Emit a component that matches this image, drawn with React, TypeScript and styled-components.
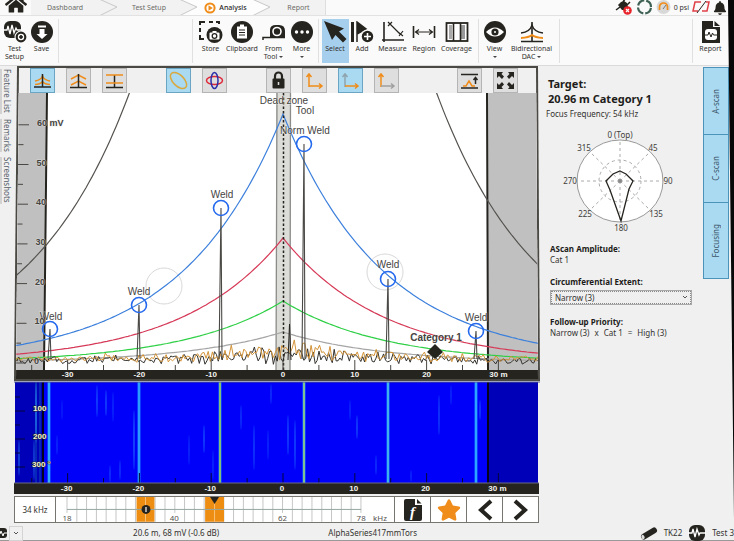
import React from "react";
import styled, { createGlobalStyle, css } from "styled-components";
import { FaHome, FaBell, FaStar } from "react-icons/fa";

const INK = "#26241f";
const ORANGE = "#f08c1a";
const SKY = "#a9daf2";
const SANS = '"Noto Sans", "Open Sans", sans-serif';
const PLOT = '"Liberation Sans", Arial, sans-serif';

const GlobalStyle = createGlobalStyle`
  * { box-sizing: border-box; }
  html, body { margin: 0; padding: 0; background: #f0f0f0; }
  body { font-family: ${SANS}; font-size: 8px; color: #33322f; overflow: hidden; }
  button, select { font: inherit; color: inherit; margin: 0; padding: 0; border: 0; background: none; border-radius: 0; }
  a { color: inherit; text-decoration: none; }
  svg { display: block; }
`;

const Screen = styled.div`
  position: relative;
  display: flex;
  flex-direction: column;
  min-height: 100vh;
`;

const Bezel = styled.div`
  position: absolute;
  top: 0;
  right: 0;
  bottom: 0;
  width: 7px;
  background: #080808;
  clip-path: polygon(1px 0, 100% 0, 100% 100%, 7px 96%);
  pointer-events: none;
`;

/* ---------- navigation bar ---------- */

const TopBar = styled.header`
  display: flex;
  align-items: stretch;
  height: 16px;
  background: #fafafa;
  border-bottom: 1px solid #e2e2e2;
  overflow: hidden;
`;

const HomeLink = styled.a`
  width: 31px;
  display: flex;
  justify-content: center;
  align-items: flex-end;
  color: ${INK};
`;

const Crumbs = styled.nav`
  display: flex;
  font-size: 7px;
  line-height: 14px;
  color: #6c6c68;
  border-right: 1px solid #dedede;
`;

const Crumb = styled.a<{ $w: number; $current?: boolean }>`
  width: ${(p) => p.$w}px;
  display: flex;
  align-items: center;
  justify-content: center;
  gap: 3px;
  background: ${(p) => (p.$current ? "#fdfdfd" : "#f2f2f2")};
  ${(p) =>
    p.$current &&
    css`
      color: #2a2926;
      font-weight: 500;
    `}
`;

const Indicators = styled.div`
  margin-left: auto;
  padding-right: 7px;
  display: flex;
  align-items: center;
  gap: 3px;
  font-size: 7px;
`;

const Arrow = ({ left, right }: { left: string; right: string }) => (
  <svg width="20" height="16" viewBox="0 0 20 16">
    <rect width="20" height="16" fill={right} />
    <path d="M0 -1 L18 7 L0 16 Z" fill={left} />
    <path d="M0 -1 L18 7 L0 16" fill="none" stroke="#c8c8c8" strokeWidth="1" />
  </svg>
);

/* ---------- ribbon ---------- */

const Ribbon = styled.div`
  display: flex;
  height: 50px;
  padding: 3px 6px 2px 0;
  background: #fafafa;
  border-bottom: 1px solid #dadada;
`;

const Group = styled.div`
  display: flex;
  padding: 0 3px;
  border-right: 1px solid #e0e0e0;
  &:first-child { padding-left: 1px; }
  &:last-child { border-right: 0; }
`;

const Gap = styled.div`
  flex: 1;
  border-right: 1px solid #e0e0e0;
`;

const Tool = styled.button<{ $w: number; $on?: boolean }>`
  width: ${(p) => p.$w}px;
  display: flex;
  flex-direction: column;
  align-items: center;
  padding-top: 2px;
  gap: 2px;
  font-size: 7px;
  line-height: 8px;
  white-space: nowrap;
  background: ${(p) => (p.$on ? "#a6cfee" : "transparent")};
`;

const Caret = styled.span`
  display: inline-block;
  margin-left: 2px;
  vertical-align: middle;
  border: 2px solid transparent;
  border-top-color: #444;
  border-bottom: 0;
`;

const Glyph = ({ children, w = 24 }: { children: React.ReactNode; w?: number }) => (
  <svg width={w} height="22" viewBox={`0 0 ${w} 22`} fill="none" stroke={INK}>
    {children}
  </svg>
);

const TestSetupIcon = () => (
  <Glyph>
    <rect x="1" y="0" width="17" height="17" rx="6" fill={INK} stroke="none" />
    <path d="M1 9h3l1-4 2 8 2-9 2 8 2-5 1 2h4" stroke="#fff" strokeWidth="1.3" />
    <circle cx="18" cy="16" r="6.500" fill="#fafafa" stroke="none" />
    <circle cx="18" cy="16" r="4.3" strokeWidth="2.2" />
    <circle cx="18" cy="16" r="1.4" fill={INK} />
  </Glyph>
);
const SaveIcon = () => (
  <Glyph>
    <circle cx="12" cy="11" r="11" fill={INK} stroke="none" />
    <path d="M9.500 8h5v5h3L12 18l-5.500-5h3z" fill="#fff" stroke="none" />
    <path d="M8 5.500h8" stroke="#fff" strokeWidth="2" />
  </Glyph>
);
const StoreIcon = () => (
  <Glyph>
    <path d="M1 4V1h5M10 1h4M17 1h3v2M1 7v4M1 14v4h4" strokeWidth="2" />
    <circle cx="15.500" cy="14" r="8" fill={INK} stroke="none" />
    <rect x="10.500" y="11.500" width="10" height="7" rx="1" fill="#fff" stroke="none" />
    <path d="M13.500 10h4v2h-4z" fill="#fff" stroke="none" />
    <circle cx="15.500" cy="15" r="2.300" strokeWidth="1.300" />
  </Glyph>
);
const ClipboardIcon = () => (
  <Glyph>
    <circle cx="12" cy="11" r="11" fill={INK} stroke="none" />
    <rect x="7" y="5.500" width="10" height="12" fill="#fff" stroke="none" />
    <path d="M10 3.500h4v3h-4z" fill="#fff" stroke="none" />
    <path d="M9 9h6M9 11.500h6M9 14h6" strokeWidth="1" />
  </Glyph>
);
const TapeIcon = () => (
  <Glyph>
    <path d="M8 17V9q0-5 6-5h3q6 0 6 6v7H8z" fill={INK} stroke="none" />
    <path d="M1 19v-2.500h22" strokeWidth="1.500" />
    <circle cx="15" cy="10.500" r="4" fill={INK} stroke="#fff" strokeWidth="1.600" />
  </Glyph>
);
const MoreIcon = () => (
  <Glyph>
    <circle cx="12" cy="11" r="11" fill={INK} stroke="none" />
    <g fill="#fff" stroke="none">
      <circle cx="6.500" cy="11" r="1.700" />
      <circle cx="12" cy="11" r="1.700" />
      <circle cx="17.500" cy="11" r="1.700" />
    </g>
  </Glyph>
);
const SelectIcon = () => (
  <Glyph>
    <path d="M1 0 21 7.500 16 10.500 23.500 18 20 21.500 12.500 14 9 19z" fill={INK} stroke="none" />
  </Glyph>
);
const AddIcon = () => (
  <Glyph>
    <path d="M2.500 1v20" strokeWidth="3" />
    <path d="M7 21V1l9 7-9 5" fill={INK} strokeWidth="1.500" />
    <circle cx="17.500" cy="15.500" r="7" fill="#fafafa" stroke="none" />
    <circle cx="17.500" cy="15.500" r="5.700" fill={INK} stroke="none" />
    <path d="M17.500 12v7M14 15.500h7" stroke="#fff" strokeWidth="1.600" />
  </Glyph>
);
const MeasureIcon = () => (
  <Glyph>
    <path d="M3 1v20M1 19h22" strokeWidth="1.600" />
    <path d="m9 3 10 10M7 1l4 4M11 1 7 5M17 11l5 4M22 10l-4 5" strokeWidth="1.200" />
  </Glyph>
);
const RegionIcon = () => (
  <Glyph>
    <path d="M1.500 5v12M22.500 5v12" strokeWidth="1.600" />
    <path d="M3 11h18M7 8.500 3.500 11 7 13.500M17 8.500l3.500 2.500-3.500 2.500" strokeWidth="1.200" />
  </Glyph>
);
const CoverageIcon = () => (
  <Glyph>
    <rect x="1.500" y="2" width="21" height="18" fill="#fff" strokeWidth="1.800" />
    <rect x="4" y="4" width="3" height="14" fill="#aaa" stroke="none" />
    <rect x="16" y="4" width="4" height="14" fill="#999" stroke="none" />
    <path d="M8.500 2v18M15.500 2v18" strokeWidth="1.600" />
  </Glyph>
);
const ViewIcon = () => (
  <Glyph>
    <circle cx="12" cy="11" r="11" fill={INK} stroke="none" />
    <path d="M3 11q9-9 18 0-9 9-18 0z" fill="#fff" stroke="none" />
    <circle cx="12" cy="11" r="3.600" fill={INK} stroke="none" />
    <circle cx="12" cy="11" r="1" fill="#fff" stroke="none" />
  </Glyph>
);
const DacIcon = () => (
  <Glyph>
    <path d="M12 1v19M1 20.500h22" strokeWidth="1.600" />
    <path d="M1 12q9-1 11-8 2 7 11 8" strokeWidth="1.300" />
    <path d="M1 17q8-.5 11-3 3 2.500 11 3" stroke={ORANGE} strokeWidth="2" />
  </Glyph>
);
const ReportIcon = () => (
  <Glyph>
    <path d="M3 0h11v6h7v16H3z" fill={INK} stroke="none" />
    <path d="M15.500 0 21 5h-5.500z" fill={INK} stroke="none" />
    <rect x="6" y="8" width="12" height="11" rx="3" fill="#fff" stroke="none" />
    <path d="M6 14h3l1-3 2 5 1.500-4 1 2H18" strokeWidth="1" />
  </Glyph>
);

/* ---------- body ---------- */

const Body = styled.main`
  flex: 1;
  display: grid;
  grid-template-columns: 14px minmax(0, 1fr) 194px;
  align-items: start;
`;

const SideTabs = styled.div`
  display: flex;
  flex-direction: column;
  gap: 5px;
  padding-top: 3px;
`;

const SideTab = styled.button<{ $h: number }>`
  height: ${(p) => p.$h}px;
  padding-right: 1px;
  writing-mode: vertical-rl;
  font-size: 8px;
  line-height: 11px;
  color: #56606a;
  text-align: left;
  white-space: nowrap;
  border-left: 2px solid #d2d2d2;
`;

const Charts = styled.div`
  display: flex;
  flex-direction: column;
`;

const Frame = styled.section`
  padding: 2px;
  background: #4b4943;
  clip-path: polygon(3px 0, calc(100% - 2px) 0, 100% 100%, 0 100%);
`;

const FrameInner = styled.div`
  background: #f0f0f0;
  clip-path: polygon(3px 0, calc(100% - 2px) 0, 100% 100%, 0 100%);
`;

const PlotTools = styled.div`
  display: flex;
  gap: 39px;
  height: 25px;
  padding: 0 20px 0 14px;
`;

const ToolSet = styled.div<{ $end?: boolean }>`
  display: flex;
  gap: 11px;
  ${(p) => p.$end && "margin-left: auto;"}
`;

const PlotButton = styled.button<{ $on?: boolean }>`
  width: 25px;
  height: 25px;
  display: flex;
  align-items: center;
  justify-content: center;
  background: ${(p) => (p.$on ? SKY : "#dedede")};
  border: 1px solid ${(p) => (p.$on ? "#6aa6c4" : "#b4b4b4")};
`;

const Chart = styled.svg`
  width: 100%;
  height: auto;
`;

const Icon = ({ children }: { children: React.ReactNode }) => (
  <svg width="19" height="19" viewBox="0 0 19 19" fill="none" stroke={INK} strokeWidth="1.500">
    {children}
  </svg>
);

/* ---------- plot data ---------- */

const X0 = 283;
const Y0 = 363;
const PX = 7.18;
const DECAY = 0.00995;

const dacPath = (peak: number) => {
  const pts: string[] = [];
  for (let x = 14; x <= 540; x += 3) {
    pts.push(`${x} ${(Y0 - peak * Math.exp(-DECAY * Math.abs(x - X0))).toFixed(1)}`);
    if (x < X0 && x + 3 > X0) pts.push(`${X0} ${Y0 - peak}`);
  }
  return "M" + pts.join("L");
};

const noisePath = (seed: number, lift: number, step: number) => {
  let s = seed;
  const rnd = () => {
    s = (s * 16807) % 2147483647;
    return s / 2147483647;
  };
  const pts: string[] = [];
  for (let x = 15; x <= 538; x += step) {
    const spread = 7 + 17 * Math.exp(-Math.abs(x - X0) / 95);
    const r = rnd() * 0.7 + rnd() * rnd() * 0.4;
    pts.push(`${x.toFixed(1)} ${(Y0 + 1 - spread * (r + lift)).toFixed(1)}`);
  }
  return "M" + pts.join("L");
};

const NOISE_ORANGE = noisePath(7177, 0.14, 2.1);
const NOISE_BLACK = noisePath(123457, -0.05, 1.9);

const WELDS = [
  { x: 50, y: 329 },
  { x: 139, y: 305 },
  { x: 221, y: 208 },
  { x: 304, y: 144 },
  { x: 388, y: 279 },
  { x: 476, y: 331 },
];

const TAGS = [
  { x: 51, y: 320, t: "Weld" },
  { x: 139, y: 295, t: "Weld" },
  { x: 222, y: 198, t: "Weld" },
  { x: 284, y: 104, t: "Dead zone" },
  { x: 305, y: 114, t: "Tool" },
  { x: 305, y: 134, t: "Norm Weld" },
  { x: 388, y: 268, t: "Weld" },
  { x: 476, y: 321, t: "Weld" },
];

const X_MARKS = [-30, -20, -10, 0, 10, 20, 30];
const X_MINOR = [-35, -25, -15, -5, 5, 15, 25];
const Y_MARKS = [0, 10, 20, 30, 40, 50, 60];

const xLabel = (m: number) => (m === 30 ? "30 m" : String(m));

const AScan = () => (
  <Chart viewBox="16 93 522 286" role="img" aria-label="A-scan">
    <rect x="14" y="93" width="526" height="277" fill="#fff" />
    <path d="M14 93H47L44 370H14z" fill="#c0c0c0" />
    <path d="M487 93H540V370H488z" fill="#c0c0c0" />
    <path d="M276 93H291L290 370H276z" fill="#dcdcd9" />
    <path d="M277 93 276 370M290.500 93 290 370" stroke="#8b8b88" strokeWidth="1.300" />
    <circle cx="164" cy="286" r="18" fill="none" stroke="#d8d8d8" />
    <circle cx="385" cy="272" r="18" fill="none" stroke="#d8d8d8" />
    <path d="M47 93 44 370M487 93 488 370" stroke={INK} strokeWidth="2" />
    <g fill="none" strokeWidth="1.200">
      <path d={dacPath(1245)} stroke="#55534f" />
      <path d={dacPath(31)} stroke="#a5a5a5" />
      <path d={dacPath(62)} stroke="#2fd046" />
      <path d={dacPath(125)} stroke="#d63a58" />
      <path d={dacPath(249)} stroke="#3d80dc" />
      <path d={NOISE_BLACK} stroke="#34322d" strokeWidth="1" />
      <path d={NOISE_ORANGE} stroke="#d39338" strokeWidth="1" />
    </g>
    <path d="M283.500 93V370" stroke={INK} strokeWidth="1.500" strokeDasharray="2.500 2" />
    <path d="M288 360 289.500 324 291 360" stroke={INK} fill="none" />
    {WELDS.map((w) => (
      <g key={w.x} fill="none">
        <path d={`M${w.x - 2} 359 ${w.x} ${w.y} ${w.x + 1} 359`} stroke="#4a4946" strokeWidth="1.100" />
        <circle cx={w.x} cy={w.y} r="7.500" stroke="#2469ee" strokeWidth="1.600" />
      </g>
    ))}
    <path d="m435 344 8 8-8 7-8-7z" fill={INK} />
    <g stroke="#4a4844" strokeWidth="1">
      {Y_MARKS.map((v) => (
        <path key={v} d={`M14 ${Y0 - v * 3.97}H${26 + v / 20}`} />
      ))}
      {Y_MARKS.slice(0, 6).map((v) => (
        <path key={v} d={`M14 ${Y0 - (v + 5) * 3.97}H${21 + v / 20}`} />
      ))}
      {X_MARKS.map((m) => (
        <path key={m} d={`M${X0 + m * PX} 360V370`} />
      ))}
      {X_MINOR.map((m) => (
        <path key={m} d={`M${X0 + m * PX} 365V370`} />
      ))}
    </g>
    <g fontFamily={PLOT} fontSize="10" textAnchor="middle" fill="#45443f" stroke="#fff" strokeOpacity="0.500" strokeWidth="1" paintOrder="stroke">
      {TAGS.map((t) => (
        <text key={t.x + t.t} x={t.x} y={t.y}>
          {t.t}
        </text>
      ))}
      <text x="436" y="341" fontWeight="700">
        Category 1
      </text>
    </g>
    <g fontFamily={PLOT} fontSize="9" fontWeight="700" fill="#45443f" stroke="#e8e8e8" strokeOpacity="0.600" strokeWidth="1" paintOrder="stroke">
      {Y_MARKS.map((v) => (
        <text key={v} x={34 + v / 20} y={364 - v * 3.97}>
          {v === 60 ? "60 mV" : v}
        </text>
      ))}
    </g>
    <rect x="14" y="370" width="526" height="9" fill={INK} />
    <g fontFamily={PLOT} fontSize="8" fontWeight="700" textAnchor="middle" fill="#f4f4f0">
      {X_MARKS.map((m) => (
        <text key={m} x={X0 + m * PX} y="377">
          {xLabel(m)}
        </text>
      ))}
    </g>
  </Chart>
);

const STREAKS = [
  [34, 440, 40, 0.35], [36, 383, 60, 0.5], [97, 385, 32, 0.35], [106, 390, 26, 0.35], [113, 392, 30, 0.2],
  [134, 410, 60, 0.4], [189, 435, 30, 0.2], [204, 425, 28, 0.35], [213, 450, 30, 0.2], [241, 405, 25, 0.25],
  [254, 425, 45, 0.3], [268, 430, 30, 0.2], [271, 384, 20, 0.25], [288, 415, 40, 0.35], [295, 420, 50, 0.35],
  [350, 400, 20, 0.2], [357, 415, 24, 0.35], [376, 455, 20, 0.25], [439, 395, 40, 0.3], [451, 385, 20, 0.2],
  [480, 400, 20, 0.3], [57, 435, 20, 0.2], [110, 465, 18, 0.25], [120, 460, 20, 0.25], [62, 400, 20, 0.15],
  [411, 470, 12, 0.2], [19, 440, 36, 0.4],
];

const BANDS = [
  { x: 49, hue: "#42c8ff" },
  { x: 139, hue: "#34b4ff" },
  { x: 220, hue: "#a4e05c" },
  { x: 304, hue: "#9ce478" },
  { x: 388, hue: "#4cd0e8" },
  { x: 476, hue: "#34c0ff" },
];

const BScan = () => (
  <Chart viewBox="14 381 526 114" role="img" aria-label="C-scan">
    <rect x="15" y="382" width="523" height="102" fill="#0000fa" />
    <path d="M15 382H43V483H15zM488 382H538V483H488z" fill="#0000b8" />
    <path d="M36 382V483M40 382V483" stroke="#1570b8" strokeWidth="1" strokeOpacity="0.700" />
    {STREAKS.map(([x, y, h, o]) => (
      <ellipse key={`${x}-${y}`} cx={x} cy={y + h / 2} rx="1" ry={Math.min(h / 2, 483 - y - h / 2)} fill="#2c9cff" fillOpacity={o} />
    ))}
    {BANDS.map((b) => (
      <g key={b.x}>
        <path d={`M${b.x} 382V483`} stroke="#1477ff" strokeWidth="4" strokeOpacity="0.500" />
        <path d={`M${b.x} 382V483`} stroke={b.hue} strokeWidth="1.600" />
      </g>
    ))}
    <path d="M43 382V483M488 382V483" stroke="#04041c" strokeWidth="2" />
    <g stroke="#05053c" strokeWidth="1">
      {X_MARKS.map((m) => (
        <path key={m} d={`M${X0 + m * PX} 473V483`} />
      ))}
      {X_MINOR.map((m) => (
        <path key={m} d={`M${X0 + m * PX} 478V483`} />
      ))}
      <path d="M15 411H25M15 439H25M15 467H25M15 397H20M15 425H20M15 453H20" />
    </g>
    <path d="M14 382H540" stroke="#4f5888" strokeWidth="1" />
    <rect x="14" y="483" width="525" height="11" fill={INK} />
    <path d="M14 483H539" stroke="#6a6a86" strokeWidth="1" />
    <g fontFamily={PLOT} fontSize="8" fontWeight="700" fill="#f4f2dc" stroke="#222" strokeWidth="1" paintOrder="stroke">
      <text x="33" y="411">100</text>
      <text x="33" y="439">200</text>
      <text x="32" y="467">300 °</text>
    </g>
    <g fontFamily={PLOT} fontSize="8" fontWeight="700" textAnchor="middle" fill="#f4f4f0">
      {X_MARKS.map((m) => (
        <text key={m} x={X0 + m * PX - 1} y="491">
          {xLabel(m)}
        </text>
      ))}
    </g>
  </Chart>
);

/* ---------- frequency bar ---------- */

const FrequencyBar = styled.div`
  display: flex;
  height: 27px;
  margin: 1px 1px 0 0;
  background: #fff;
  border: 1px solid #77756f;
`;

const Current = styled.output`
  width: 41px;
  display: flex;
  align-items: center;
  justify-content: center;
  border-right: 1px solid #77756f;
`;

const Scale = styled.div`
  flex: 1;
  min-width: 0;
`;

const StepButton = styled.button`
  width: 36px;
  display: flex;
  align-items: center;
  justify-content: center;
  color: ${INK};
  border-left: 1px solid #77756f;
`;

const TICKS = Array.from({ length: 31 }, (_, i) => 66 + i * 9.86);
const LABELLED = [0, 11, 22, 30];

const FrequencyScale = () => (
  <Chart viewBox="55 497 340 25" role="img" aria-label="Frequency scale">
    {TICKS.map((x, i) => (
      <path key={x} d={`M${x.toFixed(1)} 497V${LABELLED.includes(i) ? 513 : 522}`} stroke="#c6c6c6" />
    ))}
    <path d="M136 497h18v25h-18zM205 497h19v25h-19z" fill="#ed8d12" />
    <path d="M145 497v25M214.500 497v25" stroke="#f8bf78" />
    <path d="M66 509.500H362" stroke="#93a5a0" strokeWidth="1" />
    <circle cx="145.500" cy="509.500" r="4.500" fill={INK} />
    <path d="M145.500 507v5" stroke="#fff" strokeWidth="1.200" />
    <path d="M210 497h9l-4.500 7z" fill={INK} />
    <g fontFamily={SANS} fontSize="8" textAnchor="middle" fill="#55534f">
      <text x="66" y="521">18</text>
      <text x="174" y="521">40</text>
      <text x="283" y="521">62</text>
      <text x="362" y="521">78</text>
      <text x="381" y="521">kHz</text>
    </g>
  </Chart>
);

/* ---------- target panel ---------- */

const Aside = styled.aside`
  display: flex;
  justify-content: space-between;
  padding: 1px 5px 0 8px;
`;

const Details = styled.div`
  flex: 1;
  padding: 9px 10px 0 0;
`;

const Title = styled.h1`
  margin: 0;
  font-size: 11px;
  line-height: 15px;
  font-weight: 700;
  color: #1d1c1a;
`;

const Line = styled.p`
  margin: 0;
  line-height: 11px;
`;

const Focus = styled(Line)`
  margin: 2px 0 9px -2px;
`;

const Formula = styled(Line)`
  display: flex;
  gap: 5px;
  white-space: nowrap;
`;

const Polar = styled.svg`
  width: 120px;
  height: 104px;
  margin-left: 12px;
`;

const Block = styled.div`
  margin-top: 11px;
  padding-left: 2px;
`;

const Heading = styled.h2`
  margin: 0;
  font-size: 8px;
  line-height: 11px;
  font-weight: 700;
  color: #1d1c1a;
`;

const Picker = styled.div`
  position: relative;
  width: 142px;
  margin-top: 3px;
  svg {
    position: absolute;
    right: 4px;
    top: 4px;
    pointer-events: none;
  }
`;

const Select = styled.select`
  appearance: none;
  display: block;
  width: 100%;
  height: 15px;
  padding: 0 4px;
  font-size: 8px;
  line-height: 13px;
  background: #efefef;
  border: 1px solid #a9a9a9;
  outline: 1px dotted #888;
  outline-offset: -2px;
`;

const ScanTabs = styled.div`
  display: flex;
  flex-direction: column;
  width: 26px;
`;

const ScanTab = styled.button<{ $h: number }>`
  height: ${(p) => p.$h}px;
  display: flex;
  align-items: center;
  justify-content: center;
  background: ${SKY};
  border: 1px solid #4c93ba;
  border-top-width: 0;
  &:first-child { border-top-width: 1px; }
  span {
    writing-mode: vertical-rl;
    transform: rotate(180deg);
    line-height: 10px;
    color: #3c5568;
  }
`;

const BEARINGS: [number, number, string][] = [
  [620, 138, "0 (Top)"],
  [653, 151, "45"],
  [668, 184, "90"],
  [656, 217, "135"],
  [621, 231, "180"],
  [585, 217, "225"],
  [570, 184, "270"],
  [584, 151, "315"],
];

const PolarPlot = () => (
  <Polar viewBox="560 128 120 104" role="img" aria-label="Focusing response">
    <ellipse cx="620" cy="181" rx="43" ry="41" fill="#fff" stroke="#999" />
    <g fill="none" stroke="#aaa" strokeDasharray="3 3">
      <circle cx="620" cy="181" r="21" />
      <path d="M620 181V140M620 181V222M620 181H663M620 181H577M620 181 650 152M620 181 590 152M620 181 650 210M620 181 590 210" />
    </g>
    <circle cx="620" cy="181" r="2" fill="#888" />
    <path d="M620 171 626 174 633 181 629 189 621 221 610 190 606 181 613 174z" fill="none" stroke={INK} strokeWidth="1.300" />
    <g fontFamily={SANS} fontSize="8" textAnchor="middle" fill="#3f3e3a">
      {BEARINGS.map(([x, y, t]) => (
        <text key={t} x={x} y={y}>
          {t}
        </text>
      ))}
    </g>
  </Polar>
);

/* ---------- status bar ---------- */

const Status = styled.footer`
  display: grid;
  grid-template-columns: 24px 3fr 2fr 2fr;
  align-items: center;
  height: 16px;
  line-height: 12px;
  border-bottom: 1px solid #999;
`;

const StatusLeft = styled.div`
  display: flex;
  align-items: center;
  gap: 2px;
`;

const DropButton = styled.button`
  width: 14px;
  height: 15px;
  display: flex;
  align-items: center;
  justify-content: center;
  border: 1px solid #d4d4d4;
`;

const Reading = styled.span<{ $center?: boolean }>`
  text-align: ${(p) => (p.$center ? "center" : "left")};
  white-space: nowrap;
`;

const Device = styled.div`
  display: flex;
  align-items: center;
  justify-content: flex-end;
  gap: 6px;
  white-space: nowrap;
`;

const Down = () => (
  <svg width="6" height="6" viewBox="0 0 6 6" fill="none" stroke="#555">
    <path d="m1 2 2 2 2-2" />
  </svg>
);

const CornerAxes = ({ up, across }: { up: string; across: string }) => (
  <Icon>
    <path d="M4 16V3M1.500 6 4 3l2.500 3" stroke={up} />
    <path d="M4 15h13M14 12.500l3 2.500-3 2.500" stroke={across} />
  </Icon>
);

export default function App() {
  return (
    <Screen>
      <GlobalStyle />
      <TopBar>
        <HomeLink href="#home" aria-label="Home">
          <FaHome size={22} />
        </HomeLink>
        <Crumbs aria-label="Steps">
          <Crumb href="#dashboard" $w={68}>Dashboard</Crumb>
          <Arrow left="#f2f2f2" right="#f2f2f2" />
          <Crumb href="#setup" $w={60}>Test Setup</Crumb>
          <Arrow left="#f2f2f2" right="#fdfdfd" />
          <Crumb href="#analysis" $w={53} $current>
            <svg width="12" height="12" viewBox="0 0 12 12">
              <circle cx="6" cy="6" r="4.600" fill="#fff" stroke={ORANGE} strokeWidth="2" />
              <path d="m4.500 3.200 4.300 2.800-4.300 2.800z" fill={ORANGE} />
            </svg>
            Analysis
          </Crumb>
          <Arrow left="#fdfdfd" right="#f2f2f2" />
          <Crumb href="#report" $w={53}>Report</Crumb>
        </Crumbs>
        <Indicators>
          <svg width="18" height="15" viewBox="0 0 18 15">
            <path d="m1 10 4-3" stroke={INK} strokeWidth="1.500" />
            <path d="m3 5 4 5 3 0 3-3-1-4-3-2-3 1z" fill={INK} />
            <path d="m8 2 2-3M12 5l3-3" stroke={INK} strokeWidth="1.500" />
            <circle cx="12.500" cy="10.500" r="4.300" fill="#e8242c" />
            <path d="m11 9 3 3m0-3-3 3" stroke="#fff" strokeWidth="1.200" />
          </svg>
          <svg width="17" height="15" viewBox="0 0 17 15">
            <circle cx="8.500" cy="7" r="6.500" fill="none" stroke="#3f6255" strokeWidth="2.200" strokeDasharray="8.200 2" strokeDashoffset="-1" />
          </svg>
          <svg width="15" height="15" viewBox="0 0 15 15">
            <circle cx="7.500" cy="7" r="7" fill="#d8d8d8" />
            <path d="M3.500 10V7a4 4 0 0 1 8 0v3" fill="none" stroke={ORANGE} strokeWidth="1.700" />
            <path d="m7 9 3-4" stroke="#777" />
          </svg>
          <span>0 psi</span>
          <svg width="18" height="15" viewBox="0 0 18 15" fill="none">
            <path d="M9 2H3L1 11h5M10 11h5l2-9h-3" stroke="#e04048" strokeWidth="1.500" />
            <path d="m5 13 9-12" stroke={INK} />
          </svg>
          <FaBell size={14} color={INK} />
        </Indicators>
      </TopBar>

      <Ribbon>
        <Group>
          <Tool $w={27}><TestSetupIcon /><span>Test<br />Setup</span></Tool>
          <Tool $w={27}><SaveIcon />Save</Tool>
        </Group>
        <Gap />
        <Group>
          <Tool $w={30}><StoreIcon />Store</Tool>
          <Tool $w={33}><ClipboardIcon />Clipboard</Tool>
          <Tool $w={30}><TapeIcon /><span>From<br />Tool<Caret /></span></Tool>
          <Tool $w={26}><MoreIcon /><span>More<br /><Caret /></span></Tool>
        </Group>
        <Group>
          <Tool $w={27} $on><SelectIcon />Select</Tool>
          <Tool $w={27}><AddIcon />Add</Tool>
          <Tool $w={34}><MeasureIcon />Measure</Tool>
          <Tool $w={29}><RegionIcon />Region</Tool>
          <Tool $w={36}><CoverageIcon />Coverage</Tool>
        </Group>
        <Group>
          <Tool $w={26}><ViewIcon /><span>View<br /><Caret /></span></Tool>
          <Tool $w={48}><DacIcon /><span>Bidirectional<br />DAC<Caret /></span></Tool>
        </Group>
        <Gap />
        <Group>
          <Tool $w={29}><ReportIcon />Report</Tool>
        </Group>
      </Ribbon>

      <Body>
        <SideTabs>
          <SideTab $h={45}>Feature List</SideTab>
          <SideTab $h={33}>Remarks</SideTab>
          <SideTab $h={47}>Screenshots</SideTab>
        </SideTabs>

        <Charts>
          <Frame>
            <FrameInner>
              <PlotTools>
                <ToolSet>
                  <PlotButton $on aria-label="Curved DAC">
                    <Icon>
                      <path d="M2 10q6-1 7.500-5 1.500 4 7.500 5M2 13.500q5 0 7.500-3 2.500 3 7.500 3" stroke={ORANGE} />
                      <path d="M9.500 3v13M1 16h17" />
                    </Icon>
                  </PlotButton>
                  <PlotButton aria-label="Linear DAC">
                    <Icon>
                      <path d="m2 8 7.500-4L17 8M2 14l7.500-4 7.500 4" stroke={ORANGE} />
                      <path d="M9.500 3v13M1 16.500h17" />
                    </Icon>
                  </PlotButton>
                  <PlotButton aria-label="Flat DAC">
                    <Icon>
                      <path d="M9.500 4v12M1 16.500h17" />
                      <path d="M1 4h17M1 12h17" stroke={ORANGE} />
                    </Icon>
                  </PlotButton>
                </ToolSet>
                <ToolSet>
                  <PlotButton $on aria-label="Pipe outline">
                    <Icon>
                      <ellipse cx="9.500" cy="9.500" rx="10" ry="5.500" transform="rotate(45 9.500 9.500)" stroke="#d9a940" />
                    </Icon>
                  </PlotButton>
                  <PlotButton aria-label="Wave modes">
                    <Icon>
                      <ellipse cx="9.500" cy="9.500" rx="8" ry="4" stroke="#e02838" />
                      <ellipse cx="9.500" cy="9.500" rx="3.500" ry="8" stroke="#2a30a8" />
                    </Icon>
                  </PlotButton>
                </ToolSet>
                <ToolSet>
                  <PlotButton aria-label="Lock">
                    <Icon>
                      <path d="M6 9V5a3.500 3.500 0 0 1 7 0v4" strokeWidth="2.200" />
                      <rect x="3.500" y="7.500" width="12" height="10" rx="1" fill={INK} stroke="none" />
                      <path d="M9.500 11v3" stroke="#ddd" />
                    </Icon>
                  </PlotButton>
                  <PlotButton aria-label="Zoom both axes"><CornerAxes up={ORANGE} across={ORANGE} /></PlotButton>
                  <PlotButton $on aria-label="Zoom distance"><CornerAxes up="#8fa3ad" across={ORANGE} /></PlotButton>
                  <PlotButton aria-label="Zoom amplitude"><CornerAxes up={ORANGE} across="#a0a0a0" /></PlotButton>
                </ToolSet>
                <ToolSet $end>
                  <PlotButton aria-label="Fit amplitude">
                    <Icon>
                      <path d="M1 3.500h17M1 17h17" />
                      <path d="M3 15h3l3-5 3 5h3" stroke={ORANGE} />
                      <path d="M15.500 13V7M13.500 9l2-2.500 2 2.500" />
                    </Icon>
                  </PlotButton>
                  <PlotButton aria-label="Full screen">
                    <Icon>
                      <path d="M1 1h6L5.500 3 8 5.500 6 8 3 5 1 7zM18 1h-6l1.500 2L11 5.500 13 8l3-3 2 2zM1 18h6l-1.500-2L8 13.500 6 11l-3 3-2-2zM18 18h-6l1.500-2-2.500-2.500L13 11l3 3 2-2z" fill={INK} stroke="none" />
                    </Icon>
                  </PlotButton>
                </ToolSet>
              </PlotTools>
              <AScan />
            </FrameInner>
          </Frame>
          <BScan />
          <FrequencyBar>
            <Current>34 kHz</Current>
            <Scale><FrequencyScale /></Scale>
            <StepButton aria-label="Frequency file">
              <svg width="20" height="24" viewBox="0 0 20 24">
                <path d="M3 1h9v6h7v14q0 2-2 2H3q-2 0-2-2V3q0-2 2-2z" fill={INK} />
                <path d="M14 1 18.500 5.500H14z" fill={INK} />
                <text x="7" y="19" fontFamily='"Liberation Serif", serif' fontStyle="italic" fontWeight="700" fontSize="15" fill="#fff">f</text>
              </svg>
            </StepButton>
            <StepButton aria-label="Favourite"><FaStar size={24} color={ORANGE} /></StepButton>
            <StepButton aria-label="Previous">
              <svg width="18" height="24" viewBox="0 0 18 24" fill="none" stroke={INK} strokeWidth="4">
                <path d="M15 3 5 12l10 9" />
              </svg>
            </StepButton>
            <StepButton aria-label="Next">
              <svg width="18" height="24" viewBox="0 0 18 24" fill="none" stroke={INK} strokeWidth="4">
                <path d="m3 3 10 9-10 9" />
              </svg>
            </StepButton>
          </FrequencyBar>
        </Charts>

        <Aside>
          <Details>
            <Title>Target:<br />20.96 m Category 1</Title>
            <Focus>Focus Frequency: 54 kHz</Focus>
            <PolarPlot />
            <Block>
              <Heading>AScan Amplitude:</Heading>
              <Line>Cat 1</Line>
            </Block>
            <Block>
              <Heading as="label" htmlFor="extent">Circumferential Extent:</Heading>
              <Picker>
                <Select id="extent" defaultValue="Narrow (3)">
                  <option>Narrow (3)</option>
                </Select>
                <Down />
              </Picker>
            </Block>
            <Block>
              <Heading>Follow-up Priority:</Heading>
              <Formula>
                <span>Narrow (3)</span>
                <span>x</span>
                <span>Cat 1</span>
                <span>=</span>
                <span>High (3)</span>
              </Formula>
            </Block>
          </Details>
          <ScanTabs>
            <ScanTab $h={68}><span>A-scan</span></ScanTab>
            <ScanTab $h={68}><span>C-scan</span></ScanTab>
            <ScanTab $h={76}><span>Focusing</span></ScanTab>
          </ScanTabs>
        </Aside>
      </Body>

      <Status>
        <StatusLeft>
          <svg width="7" height="12" viewBox="0 0 7 12">
            <path d="M0 1h4q3 0 3 3v4q0 3-3 3H0z" fill={INK} />
            <path d="M0 7l1-3 2 5 1-3h3" fill="none" stroke="#fff" />
          </svg>
          <DropButton aria-label="Choose collar"><Down /></DropButton>
        </StatusLeft>
        <Reading $center>20.6 m, 68 mV (-0.6 dB)</Reading>
        <Reading>AlphaSeries417mmTors</Reading>
        <Device>
          <svg width="18" height="14" viewBox="0 0 18 14">
            <path d="m4 10.500 10-6" stroke={INK} strokeWidth="6" strokeLinecap="round" />
            <ellipse cx="3" cy="11" rx="1.500" ry="2.200" fill="#ddd" transform="rotate(-25 3 11)" />
          </svg>
          TK22
          <svg width="18" height="16" viewBox="0 0 18 16">
            <rect x="1" y="0" width="16" height="16" rx="6" fill={INK} />
            <path d="M0 8h4l1-4 2 8 2-8 2 6 1-2h6" fill="none" stroke="#fff" strokeWidth="1.300" />
          </svg>
          Test 3
        </Device>
      </Status>
      <Bezel />
    </Screen>
  );
}
